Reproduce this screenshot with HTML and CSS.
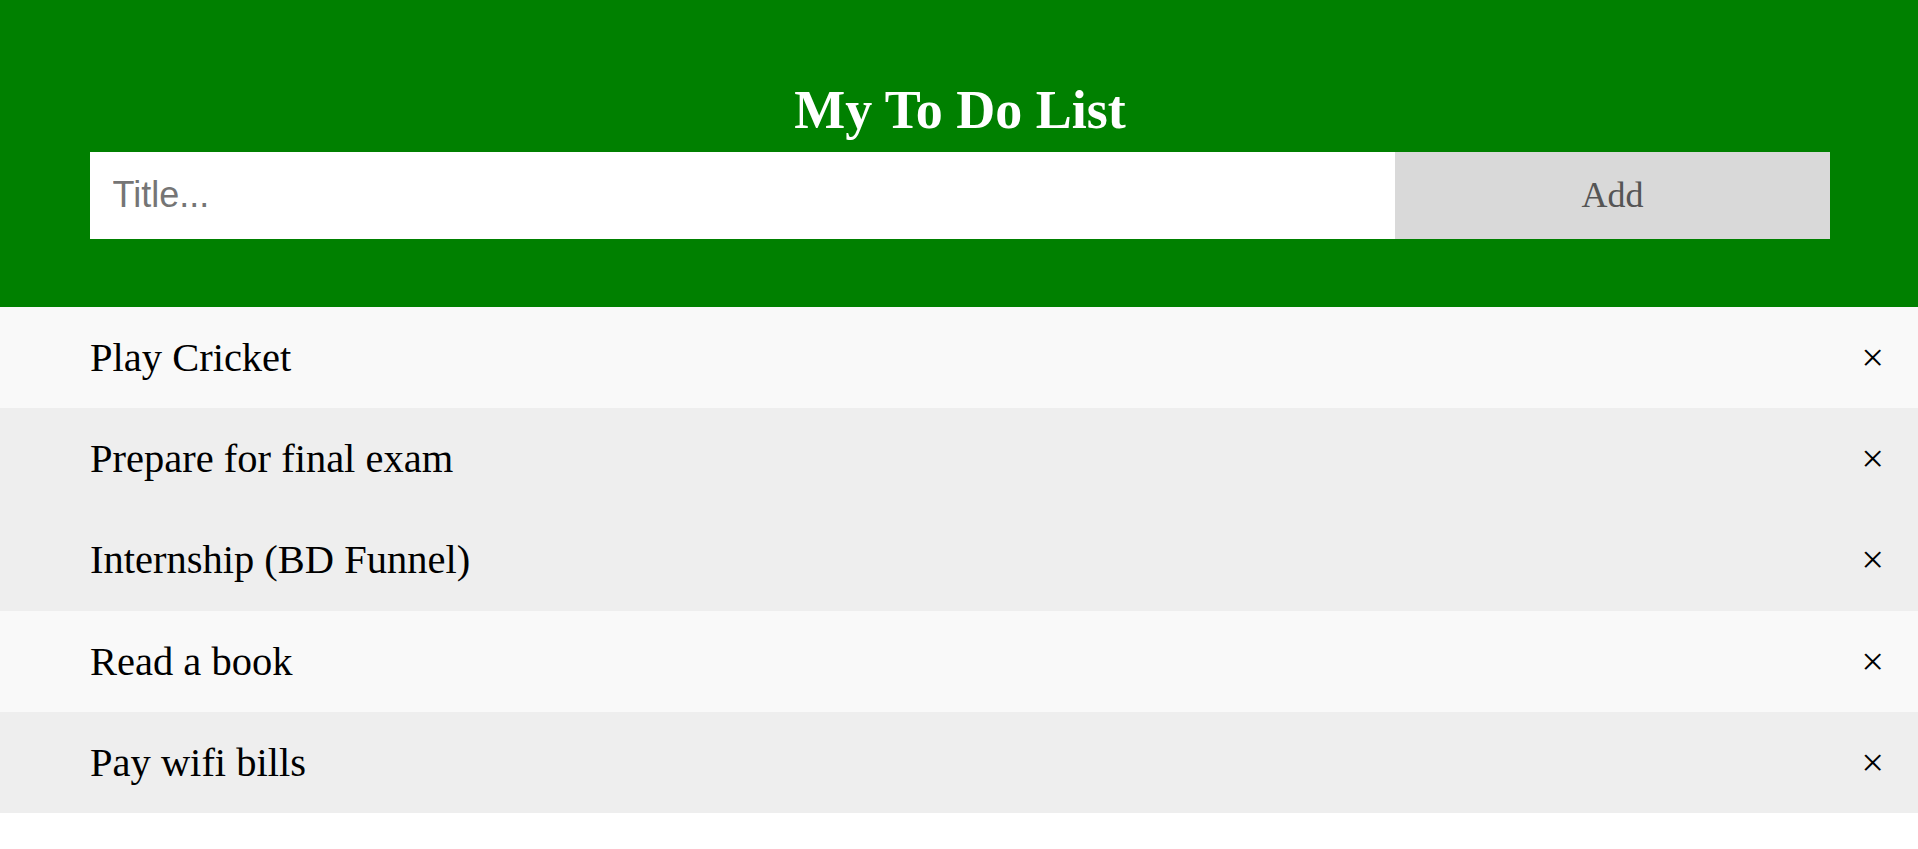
FILE: index.html
```html
<!DOCTYPE html>
<html lang="en">
<head>
<meta charset="utf-8">
<title>My To Do List</title>
<link rel="stylesheet" href="styles.css">
</head>
<body>
<div class="header">
  <h2 class="title">My To Do List</h2>
  <div class="add-row">
    <input class="title-input" type="text" placeholder="Title...">
    <span class="add-btn">Add</span>
  </div>
</div>
<ul class="todo-list">
  <li class="item light"><span class="item-text">Play Cricket</span><span class="close">&times;</span></li>
  <li class="item"><span class="item-text">Prepare for final exam</span><span class="close">&times;</span></li>
  <li class="item"><span class="item-text">Internship (BD Funnel)</span><span class="close">&times;</span></li>
  <li class="item light"><span class="item-text">Read a book</span><span class="close">&times;</span></li>
  <li class="item"><span class="item-text">Pay wifi bills</span><span class="close">&times;</span></li>
</ul>
</body>
</html>
```

FILE: styles.css
```css
* {
  box-sizing: border-box;
}

body {
  margin: 0;
  background: #ffffff;
  font-family: "Liberation Serif", "Times New Roman", serif;
  color: #000000;
}

.header {
  background-color: #008000;
  padding: 67.5px 88px 68.5px 90px;
  color: #ffffff;
  text-align: center;
}

.title {
  margin: 11.25px;
  font-size: 54px;
  line-height: 62px;
  font-weight: bold;
}

.add-row {
  display: flex;
  text-align: left;
}

.title-input {
  flex: 0 0 75%;
  width: 75%;
  margin: 0;
  border: none;
  border-radius: 0;
  outline: none;
  padding: 22.5px;
  height: 86.5px;
  font-family: "Liberation Sans", Arial, sans-serif;
  font-size: 36px;
  color: #000000;
  background: #ffffff;
}

.title-input::placeholder {
  color: #757575;
}

.add-btn {
  flex: 0 0 25%;
  width: 25%;
  padding: 22.5px;
  height: 86.5px;
  background: #d9d9d9;
  color: #555555;
  text-align: center;
  font-size: 36px;
  line-height: 41.5px;
  cursor: pointer;
}

.todo-list {
  margin: 0;
  padding: 0;
  list-style: none;
}

.item {
  display: flex;
  justify-content: space-between;
  align-items: center;
  padding: 27px 34px 27px 90px;
  font-size: 40.5px;
  line-height: 47.2px;
  background: #eeeeee;
  cursor: pointer;
}

.item.light {
  background: #f9f9f9;
}

.close {
  font-size: 40.5px;
}
```
